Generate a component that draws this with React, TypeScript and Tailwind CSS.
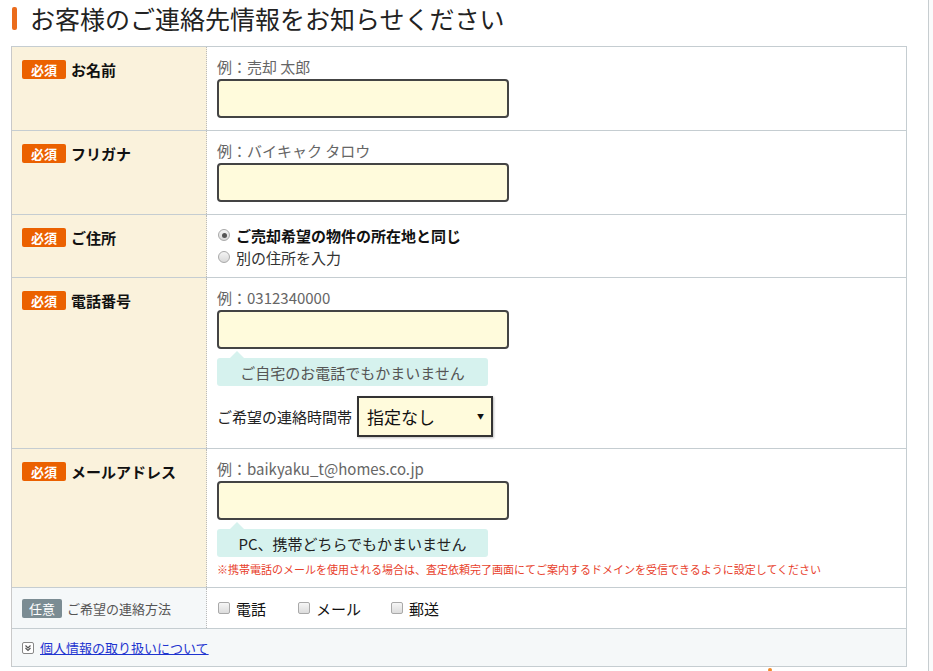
import React from "react";

const FONT = {
  fontFamily:
    '"Noto Sans CJK JP", "Noto Sans", "Liberation Sans", sans-serif',
};

function Req() {
  return (
    <span className="inline-flex h-[19px] w-[44px] items-center justify-center rounded-[2px] bg-[#eb6100] text-[13px] font-bold leading-none text-white">
      必須
    </span>
  );
}

function Label({ text }: { text: string }) {
  return (
    <div className="flex items-center gap-[5px]">
      <Req />
      <span className="text-[15px] font-bold leading-[19px] text-[#111]">
        {text}
      </span>
    </div>
  );
}

function Example({ text }: { text: string }) {
  return (
    <div className="h-[22px] text-[15px] leading-[20px] text-[#666]">{text}</div>
  );
}

function Input() {
  return (
    <div className="h-[39px] w-[292px] rounded-[4px] border-2 border-[#444] bg-[#fffbdc]" />
  );
}

function Bubble({ text, dark }: { text: string; dark?: boolean }) {
  return (
    <div className="relative mt-[9px] flex h-[28px] w-[271px] items-center justify-center rounded-[3px] bg-[#d6f2ee]">
      <span className="absolute left-[13px] top-[-7px] h-0 w-0 border-x-[7px] border-b-[7px] border-x-transparent border-b-[#d6f2ee]" />
      <span
        className={
          "text-[15px] leading-none " + (dark ? "text-[#222]" : "text-[#555]")
        }
      >
        {text}
      </span>
    </div>
  );
}

function Radio({ checked }: { checked?: boolean }) {
  return (
    <span className="flex h-[12px] w-[12px] items-center justify-center rounded-full border border-[#a9a9a9] bg-gradient-to-b from-[#f4f4f4] to-[#d9d9d9]">
      {checked && <span className="h-[5px] w-[5px] rounded-full bg-[#555]" />}
    </span>
  );
}

function Check() {
  return (
    <span className="h-[12px] w-[12px] rounded-[2px] border border-[#a9a9a9] bg-gradient-to-b from-[#f6f6f6] to-[#dcdcdc]" />
  );
}

export default function App() {
  return (
    <div className="flex min-h-[671px] bg-[#fafbfb]" style={FONT}>
      <div className="w-[929px] border-r border-[#c7cdd0] bg-white">
        {/* Title */}
        <div className="flex h-[46px] items-start pl-[12px] pt-[7px]">
          <span className="h-[23px] w-[5px] rounded-[2px] bg-[#eb6c1c]" />
          <h2 className="ml-[13px] mt-[-1px] text-[25px] leading-[25px] font-normal text-[#222]">
            お客様のご連絡先情報をお知らせください
          </h2>
        </div>

        {/* Table */}
        <div className="ml-[11px] w-[896px] border border-[#c5cdd1] border-l-[#c9c9c9]">
          {/* Row 1 */}
          <div className="flex border-b border-[#c5cdd1]">
            <div className="w-[195px] shrink-0 border-r border-dotted border-r-[#bbb] bg-[#faf2dc] pl-[10px] pt-[13px]">
              <Label text="お名前" />
            </div>
            <div className="flex-1 pl-[10px] pt-[10px] pb-[12px]">
              <Example text="例：売却 太郎" />
              <Input />
            </div>
          </div>

          {/* Row 2 */}
          <div className="flex border-b border-[#c5cdd1]">
            <div className="w-[195px] shrink-0 border-r border-dotted border-r-[#bbb] bg-[#faf2dc] pl-[10px] pt-[13px]">
              <Label text="フリガナ" />
            </div>
            <div className="flex-1 pl-[10px] pt-[10px] pb-[12px]">
              <Example text="例：バイキャク タロウ" />
              <Input />
            </div>
          </div>

          {/* Row 3 */}
          <div className="flex border-b border-[#c5cdd1]">
            <div className="w-[195px] shrink-0 border-r border-dotted border-r-[#bbb] bg-[#faf2dc] pl-[10px] pt-[13px]">
              <Label text="ご住所" />
            </div>
            <div className="flex-1 pl-[11px] pt-[9px] pb-[9px]">
              <div className="flex h-[22px] items-center gap-[6px]">
                <Radio checked />
                <span className="text-[15px] font-bold leading-none text-[#111]">
                  ご売却希望の物件の所在地と同じ
                </span>
              </div>
              <div className="flex h-[22px] items-center gap-[6px]">
                <Radio />
                <span className="text-[15px] leading-none text-[#333]">
                  別の住所を入力
                </span>
              </div>
            </div>
          </div>

          {/* Row 4 */}
          <div className="flex border-b border-[#c5cdd1]">
            <div className="w-[195px] shrink-0 border-r border-dotted border-r-[#bbb] bg-[#faf2dc] pl-[10px] pt-[13px]">
              <Label text="電話番号" />
            </div>
            <div className="flex-1 pl-[10px] pt-[10px] pb-[11px]">
              <Example text="例：0312340000" />
              <Input />
              <Bubble text="ご自宅のお電話でもかまいません" />
              <div className="mt-[10px] flex items-center gap-[5px]">
                <span className="text-[15px] leading-none text-[#222]">
                  ご希望の連絡時間帯
                </span>
                <div className="flex h-[41px] w-[136px] items-center justify-between border-2 border-[#333] bg-[#fffbdc] pl-[8px] pr-[7px] shadow-[1px_1px_2px_rgba(0,0,0,0.25)]">
                  <span className="text-[17px] leading-none text-[#111]">
                    指定なし
                  </span>
                  <span className="text-[7px] leading-none text-[#111]">▼</span>
                </div>
              </div>
            </div>
          </div>

          {/* Row 5 */}
          <div className="flex border-b border-[#c5cdd1]">
            <div className="w-[195px] shrink-0 border-r border-dotted border-r-[#bbb] bg-[#faf2dc] pl-[10px] pt-[13px]">
              <Label text="メールアドレス" />
            </div>
            <div className="flex-1 pl-[10px] pt-[10px] pb-[9px]">
              <Example text="例：baikyaku_t@homes.co.jp" />
              <Input />
              <Bubble text="PC、携帯どちらでもかまいません" dark />
              <div className="mt-[4px] h-[17px] text-[11px] leading-[17px] text-[#e8412c]">
                ※携帯電話のメールを使用される場合は、査定依頼完了画面にてご案内するドメインを受信できるように設定してください
              </div>
            </div>
          </div>

          {/* Row 6 */}
          <div className="flex h-[41px] border-b border-[#c5cdd1]">
            <div className="flex w-[195px] shrink-0 items-center gap-[5px] border-r border-dotted border-r-[#bbb] bg-[#f5f8f9] pl-[10px]">
              <span className="inline-flex h-[19px] w-[40px] items-center justify-center rounded-[2px] bg-[#7b8c93] text-[13px] leading-none text-white">
                任意
              </span>
              <span className="text-[13px] leading-none text-[#555]">
                ご希望の連絡方法
              </span>
            </div>
            <div className="flex flex-1 items-center pl-[11px]">
              <div className="flex items-center gap-[6px]">
                <Check />
                <span className="text-[15px] leading-none text-[#111]">電話</span>
              </div>
              <div className="ml-[32px] flex items-center gap-[6px]">
                <Check />
                <span className="text-[15px] leading-none text-[#111]">メール</span>
              </div>
              <div className="ml-[30px] flex items-center gap-[6px]">
                <Check />
                <span className="text-[15px] leading-none text-[#111]">郵送</span>
              </div>
            </div>
          </div>

          {/* Row 7 */}
          <div className="flex h-[37px] items-center gap-[6px] bg-[#f5f8f9] pl-[10px]">
            <span className="flex h-[12px] w-[12px] items-center justify-center rounded-[2px] border border-[#888] bg-white">
              <svg width="8" height="8" viewBox="0 0 8 8" fill="none">
                <path d="M1.5 1.5L4 4L6.5 1.5" stroke="#555" strokeWidth="1.2" />
                <path d="M1.5 4L4 6.5L6.5 4" stroke="#555" strokeWidth="1.2" />
              </svg>
            </span>
            <a href="#" className="text-[13px] leading-none text-[#1f35d0] underline">
              個人情報の取り扱いについて
            </a>
          </div>
        </div>
        <div className="ml-[768px] mt-[1px] h-[4px] w-[4px] rounded-full bg-[#f08a2a]" />
      </div>
    </div>
  );
}
